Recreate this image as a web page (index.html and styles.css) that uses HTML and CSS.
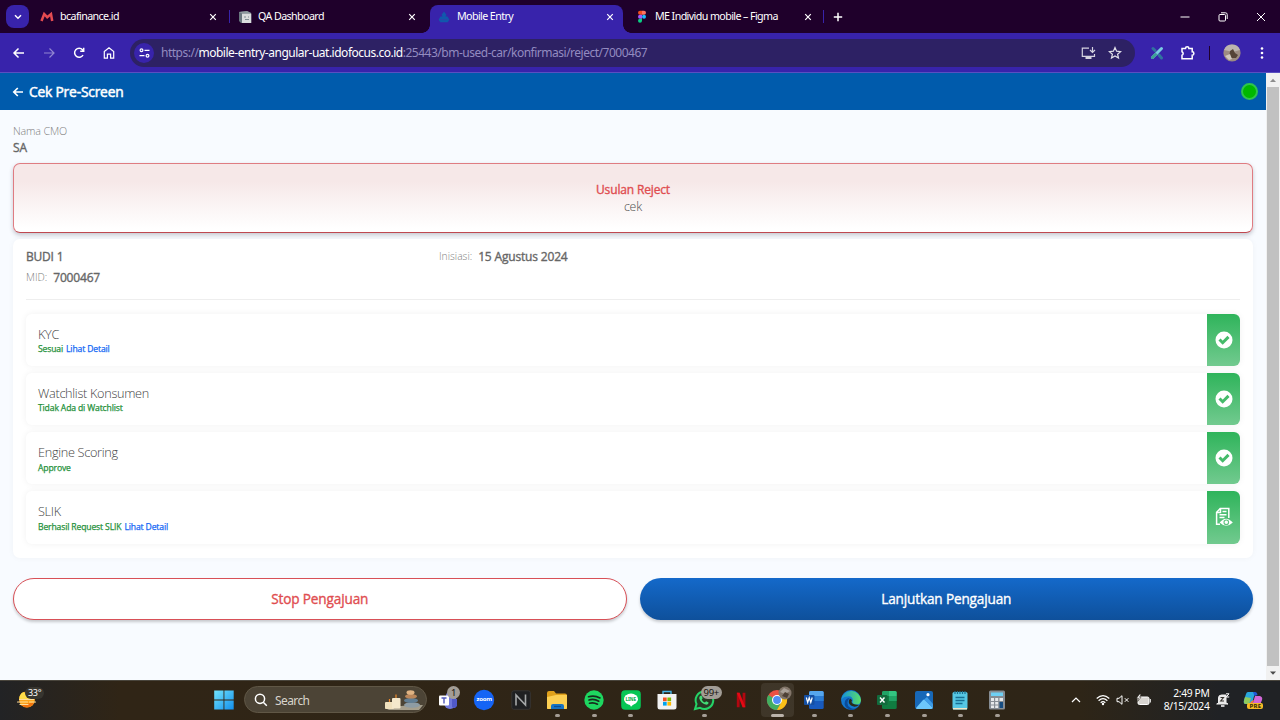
FILE: index.html
```html
<!DOCTYPE html>
<html lang="id">
<head>
<meta charset="utf-8">
<title>Mobile Entry</title>
<link rel="stylesheet" href="styles.css">
</head>
<body>
<div class="screen">
  <div class="tabstrip">
    <div class="tab-menu"><svg width="8" height="6" viewBox="0 0 8 6"><path d="M1 1.2l3 3 3-3" class="line w15"/></svg></div>
    <div class="tab first">
      <svg class="fav" width="14" height="14" viewBox="0 0 14 14"><path d="M1.500 11L4.200 4 7.200 7.200 11 4l1.200 7" fill="none" stroke="#e44b51" stroke-width="2.500"/></svg>
      <span class="label">bcafinance.id</span>
      <svg class="close" width="8" height="8" viewBox="0 0 8 8"><path d="M1.2 1.2l5.6 5.6M6.8 1.2L1.2 6.8" class="line w12"/></svg>
    </div>
    <i class="sep"></i>
    <div class="tab second">
      <svg class="fav" width="14" height="14" viewBox="0 0 14 14"><path d="M1 2l8-1 4 2v10H3L1 11z" fill="#67757d"/><path d="M4 3.5h9.3V13H4z" fill="#d9dddd"/><path d="M1 2l8-1 4 2-9 .6z" fill="#8d999e"/><path d="M6 7h2m2 0h1M7 9.5h4" stroke="#7f8d92" stroke-width="1"/></svg>
      <span class="label">QA Dashboard</span>
      <svg class="close" width="8" height="8" viewBox="0 0 8 8"><path d="M1.2 1.2l5.6 5.6M6.8 1.2L1.2 6.8" class="line w12"/></svg>
    </div>
    <div class="tab active">
      <svg class="fav" width="14" height="14" viewBox="0 0 14 14"><path d="M7 1.500l2.400 3.300-.8 1.600h2l1.700 3.400-1.600 2.400H3.300L1.700 9.800l1.700-3.400h2l-.8-1.600z" fill="#1158ad"/><path d="M3 9.600h8" stroke="#2748ad"/></svg>
      <span class="label">Mobile Entry</span>
      <svg class="close" width="8" height="8" viewBox="0 0 8 8"><path d="M1.2 1.2l5.6 5.6M6.8 1.2L1.2 6.8" class="line w12"/></svg>
    </div>
    <div class="tab fourth">
      <svg class="fav" width="14" height="14" viewBox="0 0 14 14"><path d="M7 .8H5a2 2 0 0 0 0 4h2z" fill="#f24e1e"/><path d="M7 .8h2a2 2 0 0 1 0 4H7z" fill="#ff7262"/><path d="M7 4.800H5a2 2 0 0 0 0 4h2z" fill="#a259ff"/><circle cx="9" cy="6.800" r="2" fill="#1abcfe"/><path d="M7 8.800H5a2 2 0 1 0 2 2z" fill="#0acf83"/></svg>
      <span class="label">ME Individu mobile – Figma</span>
      <svg class="close" width="8" height="8" viewBox="0 0 8 8"><path d="M1.2 1.2l5.6 5.6M6.8 1.2L1.2 6.8" class="line w12"/></svg>
    </div>
    <i class="sep"></i>
    <svg class="newtab" width="10" height="10" viewBox="0 0 10 10"><path d="M5 .8v8.400M.8 5h8.400" class="line w15"/></svg>
    <div class="winbtns">
      <svg width="10" height="10" viewBox="0 0 10 10"><path d="M.5 5h9" class="line w1"/></svg>
      <svg width="10" height="10" viewBox="0 0 10 10"><rect x="1" y="2.500" width="6.500" height="6.500" rx="1" class="line w1"/><path d="M3 .8h4.500A1.700 1.700 0 0 1 9.200 2.500V7" class="line w1"/></svg>
      <svg width="10" height="10" viewBox="0 0 10 10"><path d="M1 1l8 8M9 1L1 9" class="line w1"/></svg>
    </div>
  </div>

  <div class="toolbar">
    <div class="nav">
      <svg width="14" height="14" viewBox="0 0 14 14"><path d="M12 7H2.500M6.500 2.500L2 7l4.500 4.500" class="line w15"/></svg>
      <svg width="14" height="14" viewBox="0 0 14 14" opacity=".45"><path d="M2 7h9.500M7.500 2.500L12 7l-4.500 4.500" class="line w12"/></svg>
      <svg width="14" height="14" viewBox="0 0 14 14"><path d="M11 9a4.500 4.500 0 1 1-.5-5.200L11.500 5M11.700 1.800v3.500H8.200" class="line w15"/></svg>
      <svg width="14" height="14" viewBox="0 0 14 14"><path d="M2.300 5.500L7 1.800l4.700 3.700v6.700H8.600V8.200H5.400v4H2.300z" class="line w12"/></svg>
    </div>
    <div class="omnibox">
      <span class="tune"><svg width="11" height="10" viewBox="0 0 11 10"><circle cx="2.500" cy="2.300" r="1.400" class="line w12"/><path d="M5.500 2.300H10.500M.5 7.700h5" class="line w12"/><circle cx="8.500" cy="7.700" r="1.400" class="line w12"/></svg></span>
      <span class="url"><span>https://</span><b>mobile-entry-angular-uat.idofocus.co.id</b><span>:25443/bm-used-car/konfirmasi/reject/7000467</span></span>
      <svg class="install" width="15" height="14" viewBox="0 0 15 14"><path d="M8 2.200H1.300v8.200h12.200V8M11.500 1v5M9 4l2.500 2.500L14 4" class="line w12"/><path d="M4.500 11h6v2h-6z" fill="#fff"/></svg>
      <svg class="star" width="14" height="14" viewBox="0 0 14 14"><path d="M7 1.500l1.600 3.700 4 .4-3 2.600.9 3.900L7 10l-3.500 2.100.9-3.900-3-2.600 4-.4z" class="line w12"/></svg>
    </div>
    <svg class="ext" width="14" height="14" viewBox="0 0 14 14"><path d="M3 2.500l2 2M9 9l2.500 3" stroke="#31739f" stroke-width="3" stroke-linecap="round"/><path d="M11.500 2.500L2.500 11.500" stroke="#79cbe2" stroke-width="3" stroke-linecap="round"/><path d="M5.500 8.500l-3 3" stroke="#3fa096" stroke-width="3" stroke-linecap="round"/></svg>
    <svg class="puzzle" width="16" height="16" viewBox="0 0 16 16"><path d="M2 3.500h3.500a1.700 1.700 0 0 1 3.400 0h3.300v3.300a1.700 1.700 0 0 1 0 3.400v3.600H2v-3.500a1.900 1.900 0 0 0 0-3.500z" class="line w15"/></svg>
    <i class="toolsep"></i>
    <svg class="avatar" width="18" height="18" viewBox="0 0 18 18"><circle cx="9" cy="9" r="8.600" fill="#9c8b82"/><path d="M1 6a8.600 8.600 0 0 1 16 0L10 8z" fill="#bcb4ae"/><path d="M7 7l3-2 2 4 3 2-2 3H6z" fill="#554337"/><path d="M2 12l5-2 2 5-3 1z" fill="#d0c8be"/></svg>
    <svg class="dots" width="4" height="14" viewBox="0 0 4 14"><g fill="#fff"><circle cx="2" cy="2.500" r="1.300"/><circle cx="2" cy="7" r="1.300"/><circle cx="2" cy="11.500" r="1.300"/></g></svg>
  </div>

  <div class="viewport">
    <main class="page">
      <header class="apphead">
        <svg width="12" height="12" viewBox="0 0 12 12"><path d="M11 6H2M5.800 2L1.800 6l4 4" class="line w17"/></svg>
        <h1 class="bold">Cek Pre-Screen</h1>
        <span class="status"></span>
      </header>
      <div class="content">
        <div class="muted cmo">Nama CMO</div>
        <div class="bold cmo-val">SA</div>
        <section class="reject">
          <div class="bold reject-title">Usulan Reject</div>
          <div class="reject-note">cek</div>
        </section>
        <section class="card">
          <div class="info">
            <div class="who">
              <div class="bold name">BUDI 1</div>
              <div class="pair"><span class="muted mid">MID:</span><span class="bold mid-val">7000467</span></div>
            </div>
            <div class="pair started"><span class="muted ini">Inisiasi:</span><span class="bold date">15 Agustus 2024</span></div>
          </div>
          <div class="checks">
            <div class="check"><div class="txt"><div class="title">KYC</div><div class="sub"><span>Sesuai</span><a>Lihat Detail</a></div></div>
              <div class="badge"><svg width="18" height="18" viewBox="0 0 18 18"><circle cx="9" cy="9" r="8.500" fill="#fff"/><path d="M4.500 8.500l3.200 3.200 5.800-5.800" fill="none" stroke="#45bb6a" stroke-width="3"/></svg></div></div>
            <div class="check"><div class="txt"><div class="title">Watchlist Konsumen</div><div class="sub"><span>Tidak Ada di Watchlist</span></div></div>
              <div class="badge"><svg width="18" height="18" viewBox="0 0 18 18"><circle cx="9" cy="9" r="8.500" fill="#fff"/><path d="M4.500 8.500l3.200 3.200 5.800-5.800" fill="none" stroke="#45bb6a" stroke-width="3"/></svg></div></div>
            <div class="check"><div class="txt"><div class="title">Engine Scoring</div><div class="sub"><span>Approve</span></div></div>
              <div class="badge"><svg width="18" height="18" viewBox="0 0 18 18"><circle cx="9" cy="9" r="8.500" fill="#fff"/><path d="M4.500 8.500l3.200 3.200 5.800-5.800" fill="none" stroke="#45bb6a" stroke-width="3"/></svg></div></div>
            <div class="check"><div class="txt"><div class="title">SLIK</div><div class="sub"><span>Berhasil Request SLIK</span><a>Lihat Detail</a></div></div>
              <div class="badge"><svg width="18" height="20" viewBox="0 0 18 20"><path d="M5 17.200H1.600V5.300L5.200 1.600h8.600V11M5.500 1.800v3.800H1.800M7.500 4.500h4M4.500 7.800h7M4.500 10.500h5" class="line w15"/><path d="M4.600 15.500Q11 7.800 17.800 15.500 11.300 22 4.600 15.500z" fill="#fff"/><circle cx="11.300" cy="15.300" r="2.300" fill="none" stroke="#5fc37f" stroke-width="1.100"/></svg></div></div>
          </div>
        </section>
        <div class="actions">
          <button class="btn stop"><span class="bold">Stop Pengajuan</span></button>
          <button class="btn go"><span class="bold">Lanjutkan Pengajuan</span></button>
        </div>
      </div>
    </main>
    <div class="scrollbar">
      <svg width="14" height="14" viewBox="0 0 14 14"><path d="M4 9l3-3.200L10 9z" fill="#8d8d8d"/></svg>
      <div class="thumb"></div>
      <svg width="14" height="14" viewBox="0 0 14 14"><path d="M4 5.500h6L7 8.700z" fill="#4a4a4a"/></svg>
    </div>
  </div>

  <footer class="taskbar">
    <div class="weather">
      <svg width="22" height="22" viewBox="0 0 22 22"><circle cx="12" cy="9.500" r="8" fill="#fba51b"/><path d="M4.200 9a8 8 0 0 1 4-7l6 4 4.500 3z" fill="#ffdc48"/><path d="M6 14.500a7.500 7.500 0 0 0 13-2z" fill="#f0720e"/><path d="M4.500 9.500h14M2.500 12h10m2 0h6M5 14.500h8" stroke="#ffdd9c" stroke-width="1.200" stroke-linecap="round"/></svg>
      <span class="temp">33°</span>
    </div>
    <svg class="start" width="20" height="20" viewBox="0 0 20 20"><defs><linearGradient id="win" x1="0" y1="0" x2="1" y2="1"><stop stop-color="#71e4fd"/><stop offset="1" stop-color="#138fec"/></linearGradient></defs><path d="M.2.5h9.300v9H.2zM10.400.5h9.300v9h-9.300zM.2 10.500h9.300v9H.2zM10.400 10.500h9.300v9h-9.300z" fill="url(#win)"/></svg>
    <div class="search">
      <svg width="14" height="14" viewBox="0 0 14 14"><circle cx="6" cy="5.800" r="4.600" class="line w15"/><path d="M9.300 9.300l3.500 3.500" class="line w15"/></svg>
      <span class="q">Search</span>
      <svg class="stones" width="40" height="22" viewBox="0 0 40 22"><path d="M1 19q18-3 38-3l-4 5H5z" fill="#a69f8d"/><rect x="1" y="13" width="9" height="7" rx="1" fill="#efe0bd"/><rect x="8" y="9" width="8.500" height="10.500" rx="1" fill="#f4e8cc"/><path d="M5.500 13V10M12 9V5.500" stroke="#ef8b2b" stroke-width="1.200"/><ellipse cx="28" cy="16" rx="8" ry="2.800" fill="#8e9ca4"/><ellipse cx="27" cy="11.500" rx="7" ry="2.500" fill="#617e94"/><ellipse cx="27" cy="7.300" rx="6" ry="2.300" fill="#bb875b"/><ellipse cx="26.500" cy="3.500" rx="4" ry="2.300" fill="#e0b383"/></svg>
    </div>
    <div class="apps">
      <div class="app"><svg width="24" height="22" viewBox="0 0 24 22"><circle cx="14" cy="7" r="4" fill="#7b83eb"/><path d="M8 9h12v5a6 6 0 0 1-12 0z" fill="#7079dc"/><path d="M16 10h5v5a3 3 0 0 1-5 3z" fill="#5059c9"/><rect x="3" y="6.500" width="10" height="10" rx="1" fill="#fff"/><path d="M5.500 9h5M8 9v5.500" stroke="#5159bd" stroke-width="1.400"/></svg><em class="count one">1</em></div>
      <div class="app"><svg width="22" height="22" viewBox="0 0 22 22"><circle cx="11" cy="11" r="10.200" fill="#1564f5"/></svg><em class="zoomtext">zoom</em></div>
      <div class="app"><svg width="20" height="20" viewBox="0 0 20 20"><rect x=".8" y=".8" width="18.500" height="18.500" rx="2" fill="#1f2022" stroke="#38393a" stroke-width=".8"/><path d="M5 15.500V5l9.500 10V4.500" fill="none" stroke="#a6a8a9" stroke-width="1.600"/></svg></div>
      <div class="app run"><svg width="22" height="20" viewBox="0 0 22 20"><path d="M1 3q0-2 2-2h5l2 2.500h9q2 0 2 2V18q0 1-1 1H2q-1 0-1-1z" fill="#e0a11b"/><path d="M1 7l9-2h11v13q0 1-1 1H2q-1 0-1-1z" fill="#fccf52"/><path d="M5 19v-3q0-2 2-2h9q2 0 2 2v3z" fill="#1673c3"/><path d="M8 16.500h7" stroke="#0c4d91" stroke-width="1.200"/></svg></div>
      <div class="app run"><svg width="20" height="20" viewBox="0 0 20 20"><circle cx="10" cy="10" r="9.700" fill="#1ed760"/><path d="M4.500 6.700q6-1.800 11.500 1.200M5 10q5-1.500 9.800 1.200M5.500 13.200q4-1.200 8 1" fill="none" stroke="#172b1d" stroke-width="1.700" stroke-linecap="round"/></svg></div>
      <div class="app run"><svg width="20" height="20" viewBox="0 0 20 20"><rect x=".2" y=".2" width="19.600" height="19.600" rx="4" fill="#06c755"/><ellipse cx="10" cy="9.200" rx="7" ry="5.700" fill="#fff"/><path d="M8 13.500l2 3.300 4-4z" fill="#fff"/></svg><em class="linetext">LINE</em></div>
      <div class="app"><svg width="22" height="22" viewBox="0 0 22 22"><path d="M7 6V2.500h8V6" fill="none" stroke="#44b4e7" stroke-width="1.400"/><path d="M1.500 5h19v13q0 2.500-2.500 2.500H4q-2.500 0-2.500-2.500z" fill="#f2f2f2"/><path d="M7 8.500h3.700v3.700H7z" fill="#f25022"/><path d="M11.400 8.500h3.700v3.700h-3.700z" fill="#7fba00"/><path d="M7 12.900h3.700v3.700H7z" fill="#00a4ef"/><path d="M11.400 12.900h3.700v3.700h-3.700z" fill="#ffb900"/></svg></div>
      <div class="app run"><svg width="22" height="22" viewBox="0 0 22 22"><path d="M2 20l1.500-5A8.800 8.800 0 1 1 7 18.800z" fill="#283824" stroke="#25d366" stroke-width="2"/><path d="M7 7l1.500-.5 1.200 2.700-1 1.200q1 2.200 3.200 3.100l1.200-1.300 2.500 1.300q0 2-2 2.200Q8 15 6.300 9.500 6 8 7 7z" fill="#42dc75"/></svg><em class="count many">99+</em></div>
      <div class="app"><svg width="12" height="16" viewBox="0 0 12 16"><path d="M1.800.8h2.800v14.500H1.800zM7.600.8h2.800v14.500H7.600z" fill="#b20710"/><path d="M1.800.8h2.800l5.800 14.500H7.600z" fill="#e50914"/></svg></div>
      <div class="app run current"><svg width="22" height="22" viewBox="0 0 22 22"><circle cx="11" cy="11" r="10" fill="#ea4335"/><path d="M2.300 6A10 10 0 0 0 11 21l4.300-7.500L11 11z" fill="#34a853"/><path d="M11 21a10 10 0 0 0 8.700-15H11l4.300 7.500z" fill="#fbbc05"/><circle cx="11" cy="11" r="5" fill="#fff"/><circle cx="11" cy="11" r="3.900" fill="#4285f4"/></svg><svg class="mini" width="14" height="14" viewBox="0 0 14 14"><circle cx="7" cy="7" r="6.500" fill="#827569"/><path d="M2 6l4-4 6 3-5 3z" fill="#aaa198"/><path d="M7 6l4 2-2 4-5-2z" fill="#4e4136"/></svg></div>
      <div class="app run"><svg width="20" height="20" viewBox="0 0 20 20"><rect x="5" y="1" width="14.700" height="18" rx="1.500" fill="#185abd"/><path d="M5 2.500Q5 1 6.500 1h11.700q1.500 0 1.500 1.500V6H5z" fill="#55a6ed"/><path d="M5 6h14.700v5H5z" fill="#2b7cd3"/><rect x="0" y="5" width="10.500" height="10" rx="1" fill="#1550a4"/><path d="M2.300 7.500l1.400 5 1.500-4.800 1.600 4.800 1.400-5" fill="none" stroke="#fff" stroke-width="1.200"/></svg></div>
      <div class="app run"><svg width="22" height="22" viewBox="0 0 22 22"><defs><linearGradient id="edge" x1="0" y1="0" x2="1" y2="0"><stop stop-color="#1593d9"/><stop offset="1" stop-color="#5bdf68"/></linearGradient></defs><circle cx="11" cy="11" r="10" fill="#1477ce"/><path d="M1.500 9A10 10 0 0 1 21 11q-.5 5-5 4.500-5-.5-3-4Q12 6.500 7.500 7.500q-4 0-6 3z" fill="url(#edge)"/><path d="M9.500 9Q5 15 10 18.500q4.500 3 8.500-1A10 10 0 0 1 10 21Q3 18 5 12q1.500-3 4.500-3z" fill="#0a4b99"/><path d="M12 11q-2.500 4.500 7 5-4 3-8 .5-4-3-1-7z" fill="#2b2a18"/></svg></div>
      <div class="app run"><svg width="20" height="20" viewBox="0 0 20 20"><rect x="5" y="1" width="14.700" height="18" rx="1.500" fill="#107c41"/><path d="M5 2.500Q5 1 6.500 1H12v5H5z" fill="#21a366"/><path d="M12 1h6.200q1.500 0 1.500 1.500V6H12z" fill="#33c481"/><path d="M12 6h7.700v5H12z" fill="#21a366"/><rect x="0" y="5" width="10.500" height="10" rx="1" fill="#126b3d"/><path d="M3 7.500l4.500 5M7.500 7.500l-4.500 5" fill="none" stroke="#fff" stroke-width="1.400"/></svg></div>
      <div class="app run"><svg width="20" height="20" viewBox="0 0 20 20"><rect x="1" y="1" width="18" height="18" rx="2" fill="#1768b8"/><path d="M2 18l7-8q1-1 2 0l8 8q-1 1-2 1H3q-1 0-1-1z" fill="#6cc7fb"/><path d="M10 9.500l3-2.500 6 7v4z" fill="#3e9ce7"/><circle cx="14" cy="4.700" r="1.600" fill="#fff"/></svg></div>
      <div class="app run"><svg width="18" height="20" viewBox="0 0 18 20"><rect x="1.500" y="2" width="15" height="17.500" rx="1.500" fill="#56c7e4"/><path d="M2 18h14v1.500H2z" fill="#f1e7c7"/><path d="M4 1v3M6.500 1v3M9 1v3M11.500 1v3M14 1v3" stroke="#1d7090" stroke-width="1.200"/><path d="M4.500 7.500h9M4.500 10.500h9M4.500 13.500h7" stroke="#176f93" stroke-width="1.300"/></svg></div>
      <div class="app run"><svg width="18" height="20" viewBox="0 0 18 20"><rect x="1" y=".5" width="16" height="19" rx="1.500" fill="#868d94"/><path d="M3 2.500h12V6H3z" fill="#6ed0f4"/><path d="M3 8h3v3H3zM7.200 8h3v3h-3zM3 12h3v2.500H3zM7.200 12h3v2.500h-3zM3 15.500h3V18H3zM7.200 15.500h3V18h-3zM11.500 8h3.500v3h-3.500z" fill="#e6e9eb"/><path d="M11.500 12H15v6h-3.500z" fill="#174d82"/></svg></div>
    </div>
    <div class="tray">
      <svg class="up" width="10" height="8" viewBox="0 0 10 8"><path d="M1 6l4-4 4 4" class="line w12"/></svg>
      <svg class="wifi" width="14" height="12" viewBox="0 0 14 12"><path d="M.7 4.500q6.300-5.700 12.600 0M2.600 6.700q4.400-4 8.800 0M4.700 8.700q2.300-2 4.600 0" class="line w12"/><circle cx="7" cy="10" r="1.200" fill="#fff"/></svg>
      <svg class="vol" width="14" height="12" viewBox="0 0 14 12"><path d="M1 4.300h2L6 1.700v8.600L3 7.700H1zM8.800 4.200l3.600 3.600M12.400 4.200L8.800 7.800" class="line w1"/></svg>
      <svg class="bat" width="15" height="12" viewBox="0 0 15 12"><rect x="2" y="3" width="11" height="7.500" rx="1.500" fill="#d8d5d0" stroke="#fff"/><path d="M14.300 5v3.500" class="line w1"/><path d="M3.500.2L.5 4.200h2.200L1.700 7.500l3.300-4.200H3.500L5 .2z" fill="#fff" stroke="#2b251a" stroke-width=".5"/></svg>
      <div class="clock"><span>2:49 PM</span><span>8/15/2024</span></div>
      <svg class="bell" width="14" height="14" viewBox="0 0 14 14"><path d="M2.500 10V5q0-3 3-3H10V10l2 1H.7z" fill="#e9e9e9" stroke="#eee"/><path d="M5 13h3.500" class="line w15"/><path d="M10 .8h3L10.200 4h3" fill="none" stroke="#fff" stroke-width="1"/><path d="M4.500 4.500H7.500L4.700 8H8" fill="none" stroke="#35322d" stroke-width="1.100"/></svg>
      <div class="copilot"><svg width="20" height="18" viewBox="0 0 20 18"><path d="M5 1h7L9 13H2q-2-1-1-4l2-6q.5-2 2-2z" fill="#29a7dd"/><path d="M10 1h2q2 0 2.500 3l-3 1z" fill="#2159d7"/><path d="M2 6L1 10q-.5 3 2 3h3l2-6z" fill="#8fca5c"/><path d="M12 5h5q3 1 2 4l-2 5H8q2-1 2.500-4z" fill="#d267d7"/><path d="M8.500 10l2.500-1-2 5H5.500z" fill="#f27947"/></svg><em>PRE</em></div>
    </div>
  </footer>
</div>
</body>
</html>
```
FILE: styles.css
```css
* { box-sizing: border-box; }
body { margin: 0; font-family: "Open Sans", "Noto Sans", sans-serif; }
svg { display: block; flex: none; }
em { font-style: normal; }
.line { fill: none; stroke: #fff; }
.w1 { stroke-width: 1; }
.w12 { stroke-width: 1.2; }
.w15 { stroke-width: 1.5; }
.w17 { stroke-width: 1.7; }
.screen { width: 1280px; height: 720px; display: flex; flex-direction: column; overflow: hidden; background: #f8fbff; }

/* browser tabs */
.tabstrip { height: 33px; background: #1f002b; display: flex; align-items: center; padding-left: 6px; color: #fff; font-family: "Noto Sans", sans-serif; font-size: 11px; }
.tab-menu { width: 23px; height: 23px; border-radius: 8px; background: #3823ab; display: flex; align-items: center; justify-content: center; }
.tab { height: 28px; align-self: flex-end; display: flex; align-items: center; padding-bottom: 4px; }
.tab .fav { margin-right: 6px; }
.tab .close { margin-left: auto; }
.label { white-space: nowrap; letter-spacing: -.6px; font-size: 10.7px; padding-bottom: 2px; }
.first { width: 200px; padding-left: 11px; padding-right: 12px; }
.second { width: 200px; padding-left: 8px; padding-right: 14px; }
.active { width: 193px; background: #3823ab; border-radius: 8px 8px 0 0; padding-left: 7px; padding-right: 9px; position: relative; }
.active::before, .active::after { content: ""; position: absolute; bottom: 0; width: 8px; height: 8px; }
.active::before { left: -8px; background: radial-gradient(circle at 0 0, transparent 7.5px, #3823ab 8px); }
.active::after { right: -8px; background: radial-gradient(circle at 100% 0, transparent 7.5px, #3823ab 8px); }
.fourth { width: 200px; padding-left: 12px; padding-right: 11px; }
.sep { width: 1px; height: 13px; background: #3823ab; }
.newtab { margin-left: 9px; }
.winbtns { margin-left: auto; display: flex; gap: 28px; padding-right: 14px; }

/* browser toolbar */
.toolbar { height: 40px; background: #3823ab; border-bottom: 1px solid #5a4fc0; display: flex; align-items: center; padding-left: 12px; }
.nav { display: flex; gap: 16px; width: 118px; }
.omnibox { width: 1005px; height: 28px; border-radius: 14px; background: #2d2164; display: flex; align-items: center; padding-left: 4px; }
.tune { width: 20px; height: 20px; border-radius: 10px; background: #3823ab; display: flex; align-items: center; justify-content: center; }
.url { margin-left: 7px; font: 12px "Noto Sans", sans-serif; color: #938bc0; white-space: nowrap; letter-spacing: -.49px; }
.url b { font-weight: 400; color: #fff; }
.install { margin-left: auto; margin-right: 12px; opacity: .8; }
.star { margin-right: 13px; opacity: .85; }
.ext { margin-left: 15px; }
.puzzle { margin-left: 16px; }
.toolsep { width: 1px; height: 14px; background: #1f002b; margin-left: 13px; }
.avatar { margin-left: 13px; }
.dots { margin-left: 19px; }

/* page */
.viewport { height: 607px; display: flex; }
.page { width: 1266px; background: #f8fbff; color: #666; }
.bold { -webkit-text-stroke: .35px currentColor; font-weight: 400; white-space: nowrap; }
.apphead { height: 37px; background: #005bac; color: #fff; display: flex; align-items: center; padding: 0 8px 0 12px; }
.apphead h1 { margin: 0 0 0 5px; font-size: 13.8px; line-height: 18px; letter-spacing: -.19px; -webkit-text-stroke-width: .5px; }
.status { margin-left: auto; width: 17px; height: 17px; border-radius: 50%; background: #00b800; border: 2px solid #2fc54c; }
.content { padding: 14px 13px 0; }
.muted { color: #808080; font-weight: 300; white-space: nowrap; }
.cmo { font-size: 10.7px; line-height: 15px; letter-spacing: -.15px; }
.cmo-val { font-size: 12px; line-height: 18px; }
.reject { margin-top: 6px; height: 70px; border: 1px solid #df7c82; border-bottom-color: #bf4850; border-radius: 7px; background: linear-gradient(#f6e8e8 25%, #fff 95%); box-shadow: 0 2px 4px rgba(60,60,80,.28); text-align: center; padding-top: 17px; }
.reject-title { color: #e04d50; font-size: 12px; line-height: 17px; letter-spacing: -.15px; }
.reject-note { font-size: 12.3px; line-height: 17px; font-weight: 300; color: #4c4c4c; letter-spacing: -.1px; }
.card { margin-top: 6px; height: 319px; background: #fff; border-radius: 7px; box-shadow: 0 0 6px rgba(0,0,0,.04); padding: 8px 13px 0; }
.info { display: flex; height: 53px; border-bottom: 1px solid #eee; }
.who { width: 413px; }
.name { font-size: 12px; line-height: 20px; letter-spacing: -.2px; }
.pair { display: flex; align-items: center; gap: 6px; height: 20px; }
.started { height: 18px; }
.mid, .ini { font-size: 10.3px; }
.mid-val, .date { font-size: 12px; letter-spacing: -.17px; }
.checks { margin-top: 13.5px; display: grid; gap: 6.6px; }
.check { height: 52.6px; display: flex; border-radius: 6px; background: #fff; box-shadow: 0 0 7px rgba(0,0,0,.06); }
.txt { flex: 1; padding: 12.2px 0 0 12px; }
.title { font-size: 12.7px; line-height: 16.5px; font-weight: 300; color: #444; letter-spacing: -.3px; }
.sub { display: flex; gap: 3px; font-size: 8.6px; line-height: 15px; color: #25913b; letter-spacing: -.14px; -webkit-text-stroke: .25px currentColor; white-space: nowrap; }
.sub a { color: #1468f5; }
.badge { width: 33px; border-radius: 0 6px 6px 0; background: linear-gradient(#2fb45b, #72ca8f); display: flex; align-items: center; justify-content: center; }
.actions { display: grid; grid-template-columns: 1fr 1fr; gap: 13px; margin-top: 20px; }
.btn { height: 42px; border-radius: 21px; font: 13.6px/20px "Open Sans", sans-serif; letter-spacing: -.15px; padding: 0; box-shadow: 0 2px 3px rgba(0,0,0,.2); }
.stop { background: #fff; border: 1px solid #d85057; color: #e04d50; }
.go { border: 0; background: linear-gradient(#1469ca, #0e509b); color: #fff; }
.scrollbar { width: 14px; background: #f1f1f1; display: flex; flex-direction: column; }
.thumb { flex: 1; margin: 0 1px; background: #c1c1c1; }

/* taskbar */
.taskbar { height: 40px; background: linear-gradient(90deg, #222325 0, #302516 120px, #2e2517 1080px, #202225 1220px); border-top: 1px solid #49453c; display: flex; align-items: center; color: #fff; font-family: "Noto Sans", sans-serif; }
.weather { position: relative; width: 214px; padding-left: 15px; }
.temp { position: absolute; left: 25px; top: -3px; padding: 0 3px; border-radius: 7px; background: #37352f; font-size: 9px; line-height: 12px; letter-spacing: -.3px; }
.start { margin-bottom: 1px; }
.search { margin: 0 0 2px 10px; width: 183px; height: 27px; border-radius: 14px; background: #4c4436; border: 1px solid #605746; display: flex; align-items: center; padding: 0 2px 0 9px; }
.q { margin: 2px 0 0 7px; font-size: 12px; color: #d8d4cc; letter-spacing: -.6px; }
.stones { margin-left: auto; }
.apps { margin-left: 2.2px; display: flex; }
.app { width: 36.65px; height: 39px; padding-bottom: 1px; display: flex; align-items: center; justify-content: center; position: relative; }
.run::after { content: ""; position: absolute; left: 16px; bottom: 3px; width: 5px; height: 3px; border-radius: 2px; background: #a49d95; }
.current::before { content: ""; position: absolute; left: 2px; top: 2px; width: 33px; height: 34px; border-radius: 4px; background: rgba(255,255,255,.08); }
.current::after { left: 12px; width: 13px; background: #bbb3ab; }
.mini { position: absolute; right: 4px; top: 5px; }
.count { position: absolute; background: #a29d96; color: #18140e; font-size: 9.5px; line-height: 13px; height: 13px; border-radius: 7px; text-align: center; }
.one { left: 18px; top: 5px; width: 13px; }
.many { left: 15px; top: 5px; width: 21px; letter-spacing: -.4px; }
.zoomtext { position: absolute; top: 14px; font-size: 6px; line-height: 8px; font-weight: 700; letter-spacing: -.3px; }
.linetext { position: absolute; top: 15px; color: #06b04c; font-size: 4.5px; line-height: 6px; font-weight: 800; }
.tray { margin-left: 56px; padding-bottom: 2px; display: flex; align-items: center; flex: 1; }
.wifi { margin-left: 15px; }
.vol { margin-left: 6px; }
.bat { margin-left: 6px; }
.clock { width: 58px; display: flex; flex-direction: column; align-items: flex-end; font-size: 10.3px; line-height: 13px; letter-spacing: -.35px; }
.bell { margin-left: 7px; }
.copilot { position: relative; margin-left: 13px; }
.copilot em { position: absolute; left: 4px; top: 12px; width: 16px; text-align: center; border-radius: 2px; background: #f6bb25; color: #302708; font-size: 6px; line-height: 6px; font-weight: 700; letter-spacing: .3px; }
```
